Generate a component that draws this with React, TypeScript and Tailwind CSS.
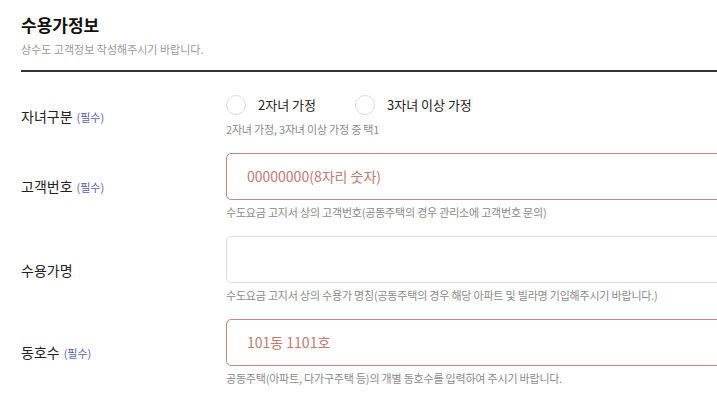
import React from "react";

const FONT = { fontFamily: '"Noto Sans CJK KR", "Noto Sans", sans-serif' };

function Required() {
  return <span className="ml-1 text-[11px] text-[#5563b3]">(필수)</span>;
}

function Row({
  label,
  required,
  helper,
  helperGap = "mt-[4px]",
  children,
}: {
  label: string;
  required?: boolean;
  helper: string;
  helperGap?: string;
  children: React.ReactNode;
}) {
  return (
    <div className="grid grid-cols-[205px_1fr] items-center">
      <div className="text-[14px] leading-5 text-[#222]">
        {label}
        {required && <Required />}
      </div>
      <div>
        {children}
        <p className={`${helperGap} text-[11px] leading-4 tracking-[-0.2px] text-[#8a8a8a]`}>{helper}</p>
      </div>
    </div>
  );
}

function TextBox({ placeholder, error }: { placeholder?: string; error?: boolean }) {
  return (
    <div
      className={`flex h-[47px] w-[560px] items-center rounded-[5px] border bg-white px-5 text-[14px] ${
        error ? "border-[#c48a82] text-[#c27a72]" : "border-[#dcdcdc] text-[#999]"
      }`}
    >
      {placeholder}
    </div>
  );
}

function Radio({ label, width }: { label: string; width?: string }) {
  return (
    <label className={`flex items-center gap-3 ${width ?? ""}`}>
      <span className="h-5 w-5 rounded-full border border-[#dcdcdc] bg-white" />
      <span className="text-[13px] text-[#222]">{label}</span>
    </label>
  );
}

export default function App() {
  return (
    <div className="h-[412px] w-[717px] overflow-hidden bg-white pl-[21px]" style={FONT}>
      <div className="pt-[13px]">
        <h2 className="text-[17px] font-bold leading-6 text-[#111]">수용가정보</h2>
        <p className="mt-[4px] text-[11px] leading-4 text-[#999]">상수도 고객정보 작성해주시기 바랍니다.</p>
      </div>
      <div className="mt-[13px] h-[2px] bg-[#333]" />

      <div className="mt-[23px] flex flex-col gap-4">
        <Row label="자녀구분" required helperGap="mt-[6px]" helper="2자녀 가정, 3자녀 이상 가정 중 택1">
          <div className="flex items-center">
            <Radio label="2자녀 가정" width="w-[129px]" />
            <Radio label="3자녀 이상 가정" />
          </div>
        </Row>
        <Row label="고객번호" required helper="수도요금 고지서 상의 고객번호(공동주택의 경우 관리소에 고객번호 문의)">
          <TextBox placeholder="00000000(8자리 숫자)" error />
        </Row>
        <Row
          label="수용가명"
          helper="수도요금 고지서 상의 수용가 명칭(공동주택의 경우 해당 아파트 및 빌라명 기입해주시기 바랍니다.)"
        >
          <TextBox />
        </Row>
        <Row label="동호수" required helper="공동주택(아파트, 다가구주택 등)의 개별 동호수를 입력하여 주시기 바랍니다.">
          <TextBox placeholder="101동 1101호" error />
        </Row>
      </div>
    </div>
  );
}
